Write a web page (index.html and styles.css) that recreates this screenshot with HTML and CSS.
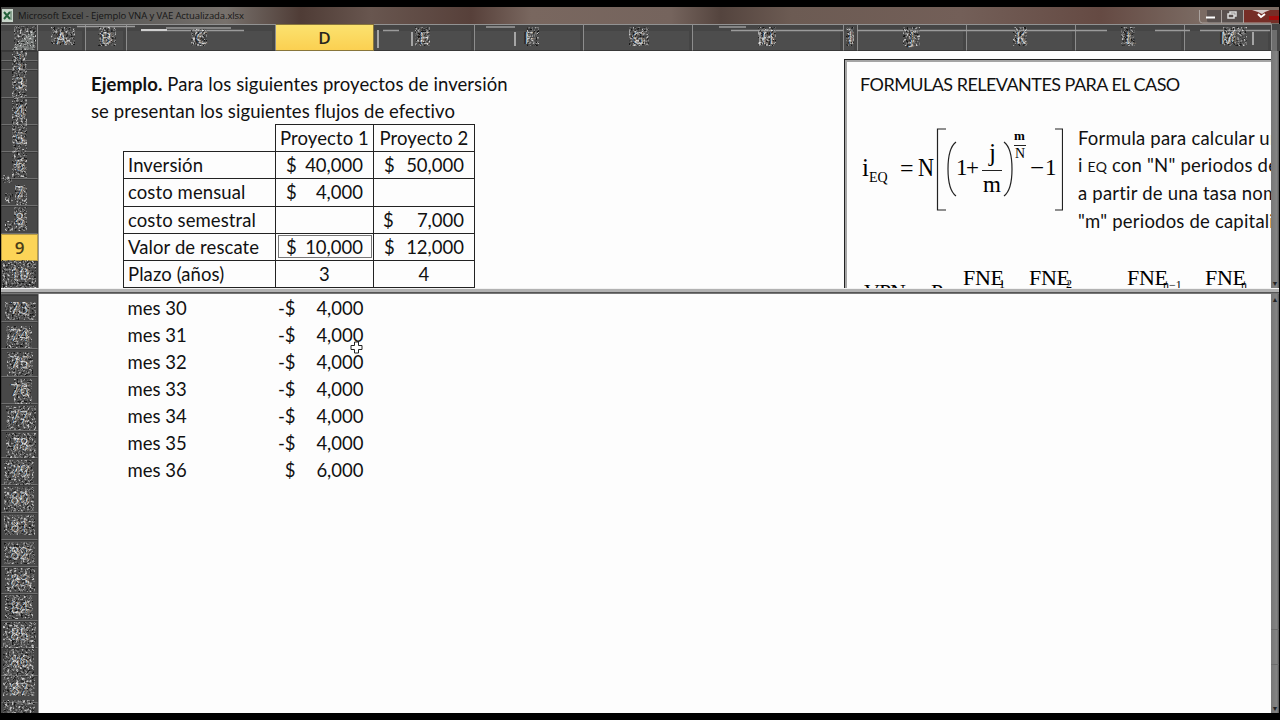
FILE: index.html
```
<!DOCTYPE html>
<html lang="es">
    <head>
        <meta charset="UTF-8" />
        <meta name="viewport" content="width=device-width, initial-scale=1.0" />
        <title>Ejemplo VNA y VAE Actualizada.xlsx</title>

        <link rel="stylesheet" href="styles.css">
    </head>
    <body>
        <main class="window">
            <header class="titlebar">
                <svg class="app-icon" width="11" height="13" viewBox="0 0 11 13">
                    <rect width="11" height="13" fill="#c9d6cb" />
                    <path d="M2 3l6 7M8 3l-6 7" stroke="#23603a" stroke-width="2" />
                    <path d="M9 2v9" stroke="#4c7058" />
                </svg>
                <span class="title">Microsoft Excel - Ejemplo VNA y VAE Actualizada.xlsx</span>
                <div class="controls">
                    <svg width="80" height="15" viewBox="0 0 80 15">
                        <path d="M8 0h37v13H11q-3 0-3-3z" fill="#59504e" />
                        <path d="M45 0h35v13H45z" fill="#762e27" />
                        <path d="M70 6h10v4H70z" fill="#a00d0c" />
                        <path d="M.5 0v10q0 3 3 3H72M22.5 0v13M44.500 0v13" fill="none" stroke="#aaa39f" />
                        <path d="M7 7.5h9" stroke="#fff" stroke-width="2" />
                        <path d="M29 4h6v4h-6zM31 4V2h6v4h-2" fill="none" stroke="#ddd" stroke-width="1.5" />
                        <path d="M53 0h18l-5 2-3 2-4-2z" fill="#d9cfcd" />
                        <path d="M59 4l3 3 4-3" fill="none" stroke="#fff" stroke-width="2" />
                    </svg>
                </div>
            </header>

            <div class="columns">
                <div class="corner"></div>
                <div>A</div>
                <div>B</div>
                <div>C</div>
                <div class="selected">D</div>
                <div>E</div>
                <div>F</div>
                <div>G</div>
                <div>H</div>
                <div>I</div>
                <div>J</div>
                <div>K</div>
                <div>L</div>
                <div>M</div>
                <div class="scroll-end"></div>
                <svg class="smudges" width="1271" height="27" viewBox="1 24 1271 27">
                    <path d="M77 26.500h58M141 30.500h103M166 28h65M486 27h29M719 27h27M731 30.500h112M857 30.500h250M1155 30.500h35M1200 30.500h70M383 30.500h16" stroke="#9b9b9b" stroke-width="1.500" />
                    <path d="M141 30h26" stroke="#d0d0d0" stroke-width="2" />
                    <path d="M378 30v18M412 32v14M515 32v14M760 32v14M1253 32v13" stroke="#a5a5a5" stroke-width="2" />
                    <g filter="url(#grain)" opacity=".7">
                        <path d="M14 26h22v24H14zM51 27h24v18H51zM98 27h18v19H98zM191 29h16v17h-16zM415 27h15v19h-15zM527 27h12v19h-12zM629 27h20v19h-20zM758 27h18v19h-18zM846 27h8v19h-8zM903 27h17v19h-17zM1013 27h14v19h-14zM1121 27h14v19h-14zM1223 27h24v19h-24z" />
                    </g>
                </svg>
            </div>

            <section class="pane pane-top">
                <div class="rows">
                    <div class="short">1</div>
                    <div class="short">2</div>
                    <div>3</div>
                    <div>4</div>
                    <div>5</div>
                    <div>6</div>
                    <div>7</div>
                    <div>8</div>
                    <div class="selected">9</div>
                    <div>10</div>
                    <svg class="grain" width="36" height="237" viewBox="0 0 36 237">
                        <path d="M11 0h15v127H11zM2 124h10v8H2zM4 142h8v10H4zM14 134h12v20H14zM4 170h8v10H4zM13 156h13v24H13zM1 209h34v28H1z" filter="url(#grain)" />
                    </svg>
                </div>
                <div class="sheet">
                    <p class="intro"><b>Ejemplo.</b> Para los siguientes proyectos de inversión</p>
                    <p class="intro">se presentan los siguientes flujos de efectivo</p>
                    <table>
                        <tr>
                            <td class="blank"></td>
                            <td class="center">Proyecto 1</td>
                            <td class="center">Proyecto 2</td>
                        </tr>
                        <tr>
                            <td>Inversión</td>
                            <td><div class="money"><span>$</span><span>40,000</span></div></td>
                            <td><div class="money"><span>$</span><span>50,000</span></div></td>
                        </tr>
                        <tr>
                            <td>costo mensual</td>
                            <td><div class="money"><span>$</span><span>4,000</span></div></td>
                            <td></td>
                        </tr>
                        <tr>
                            <td>costo semestral</td>
                            <td></td>
                            <td><div class="money wide"><span>$</span><span>7,000</span></div></td>
                        </tr>
                        <tr>
                            <td>Valor de rescate</td>
                            <td class="active"><div class="money"><span>$</span><span>10,000</span></div></td>
                            <td><div class="money"><span>$</span><span>12,000</span></div></td>
                        </tr>
                        <tr>
                            <td>Plazo (años)</td>
                            <td class="center">3</td>
                            <td class="center">4</td>
                        </tr>
                    </table>
                </div>
                <div class="formulas">
                    <h2>FORMULAS RELEVANTES PARA EL CASO</h2>
                    <div class="formula-row">
                        <svg class="equation" width="216" height="158" viewBox="847 106 216 158">
                            <g font-size="25">
                                <text x="862" y="176">i</text>
                                <text x="900" y="176" font-size="24">=</text>
                                <text x="918" y="176" textLength="16" lengthAdjust="spacingAndGlyphs">N</text>
                                <text x="956" y="175" font-size="23">1</text>
                                <text x="966" y="175" font-size="23">+</text>
                                <text x="989" y="161">j</text>
                                <text x="983" y="192" font-size="23">m</text>
                                <text x="1030" y="176">−</text>
                                <text x="1045" y="175" font-size="23">1</text>
                            </g>
                            <text x="869" y="182" font-size="14">EQ</text>
                            <text x="1014" y="140" font-size="13" font-weight="bold">m</text>
                            <text x="1015" y="158" font-size="14">N</text>
                            <g fill="none" stroke="#222" stroke-width="1.2">
                                <path d="M946 129h-8.500v81h8.500M1055 129h7.500v81h-7.500M982 170.500h20M1014 145.500h12" />
                                <path d="M956 142q-8 6-8 27t8 27M1004 142q8 6 8 27t-8 27" />
                            </g>
                        </svg>
                        <div class="explain">
                            <p>Formula para calcular una</p>
                            <p>i <small>EQ</small> con "N" periodos de</p>
                            <p>a partir de una tasa nominal</p>
                            <p>"m" periodos de capitalización</p>
                        </div>
                    </div>
                    <svg class="npv" width="424" height="24" viewBox="847 264 424 24">
                        <g font-size="22">
                            <text x="864" y="299" textLength="42">VPN</text>
                            <text x="931" y="299">P</text>
                            <text x="963" y="285" textLength="41">FNE</text>
                            <text x="1029" y="285" textLength="41">FNE</text>
                            <text x="1127" y="285" textLength="41">FNE</text>
                            <text x="1205" y="285" textLength="41">FNE</text>
                        </g>
                        <g font-size="12">
                            <text x="999" y="288">1</text>
                            <text x="1066" y="288">2</text>
                            <text x="1163" y="289">n−1</text>
                            <text x="1241" y="289">n</text>
                        </g>
                    </svg>
                </div>
                <div class="scrollbar"><span class="down">▼</span></div>
            </section>

            <div class="splitter"></div>

            <section class="pane pane-bottom">
                <div class="rows">
                    <div>73</div>
                    <div>74</div>
                    <div>75</div>
                    <div>76</div>
                    <div>77</div>
                    <div>78</div>
                    <div>79</div>
                    <div>80</div>
                    <div>81</div>
                    <div>82</div>
                    <div>83</div>
                    <div>84</div>
                    <div>85</div>
                    <div>86</div>
                    <div>87</div>
                    <svg class="grain" width="36" height="419" viewBox="0 0 36 419">
                        <path d="M4 8h31v18H4zM5 32h26v22H5zM6 58h26v24H6zM13 85h18v25H13zM5 112h30v24H5zM5 139h30v25H5zM3 166h30v25H3zM3 193h30v25H3zM3 221h31v20H3zM3 248h31v22H3zM4 274h30v24H4zM4 301h28v24H4zM2 328h33v26H2zM2 355h31v27H2zM2 382h32v20H2zM2 406h32v13H2z" filter="url(#grain)" />
                    </svg>
                </div>
                <div class="sheet">
                    <div class="month"><span>mes 30</span><span class="sign">-$</span><span>4,000</span></div>
                    <div class="month"><span>mes 31</span><span class="sign">-$</span><span>4,000</span></div>
                    <div class="month"><span>mes 32</span><span class="sign">-$</span><span>4,000</span></div>
                    <div class="month"><span>mes 33</span><span class="sign">-$</span><span>4,000</span></div>
                    <div class="month"><span>mes 34</span><span class="sign">-$</span><span>4,000</span></div>
                    <div class="month"><span>mes 35</span><span class="sign">-$</span><span>4,000</span></div>
                    <div class="month"><span>mes 36</span><span class="sign">$</span><span>6,000</span></div>
                    <svg class="cursor" width="13" height="13" viewBox="0 0 13 13">
                        <path d="M4.500 1h4v3.500H12v4H8.500V12h-4V8.500H1v-4h3.500z" fill="#fff" stroke="#222" />
                    </svg>
                </div>
                <div class="scrollbar"><span class="up">▲</span><i class="thumb"></i><span class="down">▼</span></div>
            </section>
        </main>

        <svg width="0" height="0" class="defs">
            <filter id="grain" x="0" y="0" width="100%" height="100%" color-interpolation-filters="sRGB">
                <feTurbulence type="fractalNoise" baseFrequency="0.45" numOctaves="2" seed="4" />
                <feColorMatrix values="3 0 0 0 -1  3 0 0 0 -1  3 0 0 0 -1  0 4 0 0 -1.5" />
                <feComposite operator="in" in2="SourceGraphic" />
            </filter>
        </svg>
    </body>
</html>
```
FILE: styles.css
```
body {
    margin: 0;
    background-color: #000000;
    color: #111111;
    font-family: Lato, "Liberation Sans", sans-serif;
    font-size: 18.5px;
    font-variant-ligatures: none;
    overflow: hidden;
}

p,
h2 {
    margin: 0;
    font-size: inherit;
    font-weight: normal;
}

.window {
    box-sizing: border-box;
    width: 1280px;
    height: 713px;
    padding: 7px 1px 0;
    display: flex;
    flex-direction: column;
}

/* title bar */
.titlebar {
    height: 17px;
    flex: none;
    display: flex;
    align-items: center;
    background: linear-gradient(90deg, #4a4b49 0, #5c5b59 120px, #77716c 225px, #4f3c36 300px, #68564f 370px, #57403a 470px, #79675f 530px, #75645d 670px, #54443e 720px, #6c5b53 790px, #735f58 960px, #654a43 1100px, #7b6b63 1200px);
}

.app-icon {
    margin-left: 1px;
}

.title {
    margin-left: 5px;
    font-family: "Open Sans", sans-serif;
    font-size: 9.5px;
    letter-spacing: -0.1px;
    color: #161616;
    white-space: nowrap;
}

.controls {
    margin-left: auto;
    height: 17px;
}

/* column letters */
.columns {
    position: relative;
    height: 27px;
    flex: none;
    display: grid;
    grid-template-columns: 37px 48px 41px 149px 98px 101px 109px 109px 151px 14px 109px 109px 109px 87px 8px;
    background-color: #4d4d4d;
}

.columns div {
    box-sizing: border-box;
    padding-top: 2px;
    border-top: 1px solid #929292;
    border-right: 1px solid #8d8d8d;
    border-bottom: 1px solid #383838;
    box-shadow: inset -3px 0 #454545, inset 0 6px #454545;
    text-align: center;
    font: 16px/22px "Open Sans", sans-serif;
    color: #c9c9c9;
    text-shadow: -2px 0 #262626, 2px 0 #777777, 1px -4px #303030;
    overflow: hidden;
}

.columns .corner {
    background: linear-gradient(135deg, transparent 58%, #767a78 59%);
}

.columns .selected {
    background: linear-gradient(#fbe26f, #fbd051);
    border-color: #88763b;
    box-shadow: none;
    color: #29251d;
    font-weight: 600;
    font-size: 17px;
    text-shadow: none;
}

.columns .scroll-end {
    background-color: #6d6d6d;
    border: 0;
}

.smudges {
    position: absolute;
    left: 0;
    top: 0;
}

/* panes */
.pane {
    display: flex;
    background-color: #fdfdfd;
    overflow: hidden;
}

.pane-top {
    height: 237px;
    flex: none;
}

.pane-bottom {
    flex: 1;
    min-height: 0;
}

.rows {
    position: relative;
    width: 38px;
    margin-right: -1px;
    flex: none;
    background-color: #484848;
    border-right: 1px solid #9b9b9b;
    box-sizing: border-box;
    overflow: hidden;
}

.rows div {
    box-sizing: border-box;
    height: 27.2px;
    border: 1px solid #3a3a3a;
    border-bottom-color: #707070;
    text-align: center;
    font: 16px/25px "Open Sans", sans-serif;
    color: #c4c4c4;
    text-shadow: -1px 0 #222222, 2px 1px #777777;
}

.rows .short {
    height: 9.7px;
    line-height: 7px;
    font-size: 8px;
}

.pane-bottom .rows {
    padding-top: 1px;
}

.rows .selected {
    background-color: #fcd457;
    border-color: #b69b45;
    color: #4b3d18;
    font-size: 17px;
    font-weight: 600;
    text-shadow: none;
}

.grain {
    position: absolute;
    left: 0;
    top: 0;
    opacity: 0.7;
}

.pane-top .sheet {
    width: 806px;
    flex: none;
    padding-top: 19px;
    box-sizing: border-box;
}

.intro {
    height: 27px;
    line-height: 29px;
    padding-left: 53px;
    letter-spacing: 0.08px;
    white-space: nowrap;
}

table {
    width: 352px;
    margin-left: 85px;
    border-collapse: collapse;
    table-layout: fixed;
}

td {
    box-sizing: border-box;
    height: 27.2px;
    width: 101px;
    padding: 0 3px 0 4px;
    border: 1px solid #222222;
    line-height: 26px;
    letter-spacing: 0.1px;
    white-space: nowrap;
}

td:first-child {
    width: 152px;
}

td:nth-child(2) {
    width: 98px;
}

td.blank {
    border-top: 0;
    border-left: 0;
}

td.center {
    padding: 0;
    text-align: center;
}

td.active {
    outline: 1px solid #777777;
    outline-offset: -3px;
}

.money {
    display: flex;
    justify-content: space-between;
    padding: 0 7px 0 6px;
    letter-spacing: 0;
}

.money.wide {
    padding-left: 5px;
}

/* formula box */
.formulas {
    width: 427px;
    flex: none;
    margin-top: 8px;
    box-sizing: border-box;
    border-top: 1px solid #222222;
    border-left: 1px solid #222222;
    box-shadow: inset 2px 2px #a5a5a5;
    overflow: hidden;
}

.formulas h2 {
    height: 46px;
    padding: 11px 0 0 15px;
    box-sizing: border-box;
    font-size: 18px;
    letter-spacing: -0.54px;
    line-height: 27px;
    white-space: nowrap;
}

.formula-row {
    display: flex;
    height: 158px;
    padding-left: 2px;
}

.equation {
    flex: none;
    font-family: "Liberation Serif", serif;
}

.explain {
    padding: 19px 0 0 15px;
    line-height: 27.2px;
    letter-spacing: 0.2px;
    white-space: nowrap;
}

.explain small {
    font-size: 14px;
}

.npv {
    display: block;
    margin-left: 2px;
    font-family: "Liberation Serif", serif;
}

/* scrollbars */
.scrollbar {
    width: 8px;
    flex: none;
    display: flex;
    flex-direction: column;
    align-items: center;
    background: linear-gradient(90deg, #777777, #858585 6px, #555555);
    font-size: 7px;
    line-height: 10px;
    color: #222222;
}

.scrollbar .down {
    margin-top: auto;
}

.thumb {
    width: 8px;
    height: 36px;
    margin-top: 325px;
    box-sizing: border-box;
    border: 1px solid #6c6c6c;
    border-width: 1px 0;
}

.splitter {
    height: 6px;
    flex: none;
    background: linear-gradient(#f2f2f2 0 1px, #b2b2b2 1px 4px, #555555 4px 5px, #777777 5px);
}

/* lower rows */
.pane-bottom .sheet {
    position: relative;
    flex: 1;
    padding-top: 1px;
}

.month {
    display: grid;
    grid-template-columns: 148px 20px 68px;
    height: 27.08px;
    padding-left: 89.5px;
    line-height: 27px;
}

.month span + span {
    text-align: right;
}

.cursor {
    position: absolute;
    left: 312px;
    top: 47px;
}
```
